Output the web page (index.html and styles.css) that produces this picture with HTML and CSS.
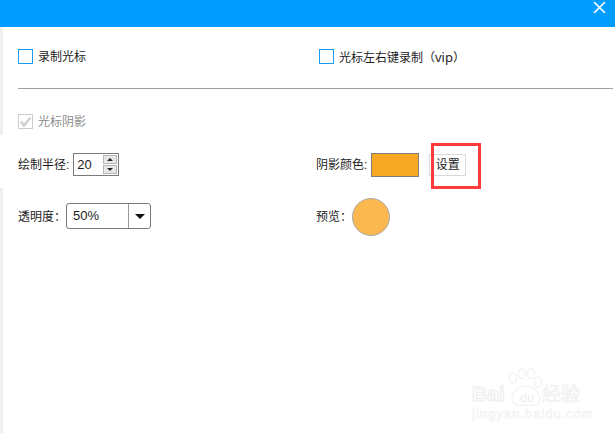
FILE: index.html
```html
<!DOCTYPE html>
<html lang="zh-CN">
<head>
<meta charset="utf-8">
<title>光标设置</title>
<link rel="stylesheet" href="styles.css">
</head>
<body>
<header class="titlebar">
  <svg class="close" width="13" height="11" viewBox="0 0 13 11"><path d="M1 0L12 11M12 0L1 11" stroke="#fff" stroke-width="1.6" fill="none"/></svg>
</header>
<div class="strip strip-a"></div>
<div class="strip strip-b"></div>
<main class="content">
  <section class="row top">
    <label class="check"><span class="box"></span>录制光标</label>
    <label class="check second"><span class="box"></span><span>光标左右键录制（<span class="latin">vip</span>）</span></label>
  </section>
  <hr class="rule">
  <label class="check disabled">
    <span class="box">
      <svg width="13" height="13" viewBox="0 0 13 13"><path d="M2 6.5L5 10.5L11.5 2.5" stroke="#cfcfcf" stroke-width="2.4" fill="none"/></svg>
    </span>光标阴影
  </label>
  <section class="row radius">
    <div class="field">绘制半径:
      <div class="spin"><span class="value">20</span>
        <div class="arrows"><span class="arrow"><i class="up"></i></span><span class="arrow"><i class="down"></i></span></div>
      </div>
    </div>
    <div class="field">阴影颜色:
      <span class="swatch"></span>
      <span class="setting">设置<span class="highlight"></span></span>
    </div>
  </section>
  <section class="row opacity">
    <div class="field wide">透明度：
      <div class="select"><span class="select-value">50%</span><span class="select-btn"><i class="down big"></i></span></div>
    </div>
    <div class="field wide">预览：
      <span class="preview"></span>
    </div>
  </section>
</main>
<aside class="watermark">
  <svg class="paw" width="36" height="40" viewBox="0 0 36 40">
    <g fill="none" stroke="#f0f0f0" stroke-width="1.2">
      <ellipse cx="5" cy="10" rx="3.5" ry="5"/><ellipse cx="14" cy="5.5" rx="3.5" ry="5"/><ellipse cx="23" cy="5.5" rx="3.5" ry="5"/><ellipse cx="30" cy="14" rx="3.5" ry="5"/>
      <path d="M4 30C5 22 12 18 18 18C24 18 32 24 32 31C32 38 25 38 18 37C11 38 3 37 4 30Z"/>
    </g>
  </svg>
  <div class="wm-line"><span class="bai">Bai</span><span class="du">du</span><span class="jy">经验</span></div>
  <div class="wm-url">jingyan.baidu.com</div>
</aside>
</body>
</html>
```

FILE: styles.css
```css
html, body { margin: 0; height: 100%; }
body {
  position: relative;
  width: 615px;
  height: 433px;
  overflow: hidden;
  background: #fff;
  color: #1c1c1c;
  font: 12px/15px "Liberation Sans", "Noto Sans CJK SC", sans-serif;
}
.titlebar {
  height: 27px;
  background: #009cff;
  display: flex;
  justify-content: flex-end;
  padding: 2px 9px 0 0;
  box-sizing: border-box;
}
.strip { position: absolute; left: 0; width: 3px; background: #efefef; }
.strip-a { top: 27px; height: 108px; }
.strip-b { top: 188px; bottom: 0; }
.content {
  padding: 22px 0 0 18px;
  width: 613px;
  box-sizing: border-box;
}
.row { display: grid; grid-template-columns: 298px 1fr; align-items: center; }
.check { display: flex; align-items: center; gap: 5px; height: 13px; padding-top: 2px; }
.second { margin-left: 3px; }
.latin { font-family: "Noto Sans", sans-serif; font-size: 13px; }
.box {
  width: 15px; height: 15px;
  margin-top: -2px;
  box-sizing: border-box;
  border: 1px solid #1a9cf0;
  display: flex; align-items: center; justify-content: center;
}
.rule { border: 0; height: 1px; background: #a0a0a0; margin: 24px 0 0; }
.disabled { margin-top: 25px; color: #8c8c8c; }
.disabled .box { border-color: #ccc; }
.radius { margin-top: 24px; height: 24px; }
.opacity { margin-top: 21px; height: 38px; }
.field { display: flex; align-items: center; gap: 4px; }
.wide { gap: 0; }
.spin {
  width: 46px; height: 23px; box-sizing: border-box;
  margin-bottom: 1px;
  border: 1px solid #7a7a7a;
  display: flex; align-items: center; justify-content: space-between;
  padding: 0 1px 0 3px;
}
.value { font-size: 13px; }
.arrows { display: flex; flex-direction: column; gap: 1px; }
.arrow { width: 14px; height: 9px; background: #e8e8e8; border: 1px solid #b5b5b5; box-sizing: border-box; display: flex; align-items: center; justify-content: center; }
.up, .down { width: 0; height: 0; border-left: 3px solid transparent; border-right: 3px solid transparent; }
.up { border-bottom: 3px solid #222; }
.down { border-top: 3px solid #222; }
.select {
  width: 85px; height: 26px; box-sizing: border-box;
  margin-bottom: 2px;
  border: 1px solid #7a7a7a; border-radius: 3px;
  display: flex; align-items: stretch;
}
.select-value { flex: 1; padding-left: 6px; line-height: 24px; font-size: 13px; }
.select-btn { width: 21px; border-left: 1px solid #9a9a9a; display: flex; align-items: center; justify-content: center; }
.big { border-left-width: 5px; border-right-width: 5px; border-top-width: 5px; border-top-color: #111; }
.swatch { width: 48px; height: 24px; box-sizing: border-box; background: #f6a724; border: 1px solid #7f7f7f; }
.setting {
  position: relative;
  width: 37px; height: 22px; margin-left: 6px; box-sizing: border-box;
  border: 1px solid #d9d9d9;
  display: flex; align-items: center; justify-content: center;
  white-space: nowrap;
}
.highlight {
  position: absolute; left: 1px; top: -12px;
  width: 50px; height: 46px; box-sizing: border-box;
  border: 3px solid #ff3b3b;
}
.preview { width: 38px; height: 38px; box-sizing: border-box; border-radius: 50%; background: #fab84e; border: 1px solid #aaa; }
.watermark {
  position: absolute; left: 472px; top: 368px; width: 112px;
  padding-top: 17px;
  color: #fff;
}
.paw { position: absolute; left: 36px; top: 0; }
.wm-line { display: flex; align-items: center; height: 18px; position: relative; }
.bai { width: 40px; font: 700 21px/18px "Liberation Sans", sans-serif; -webkit-text-stroke: 1px #ededed; }
.du { width: 30px; text-align: center; font-size: 13px; color: #ededed; padding-top: 6px; }
.jy { font-size: 19px; color: #fff; -webkit-text-stroke: .7px #ededed; white-space: nowrap; }
.wm-url { font: 400 13px/14px "Liberation Sans", sans-serif; letter-spacing: 1px; margin-top: 4px; white-space: nowrap; -webkit-text-stroke: .6px #f0f0f0; }
```
